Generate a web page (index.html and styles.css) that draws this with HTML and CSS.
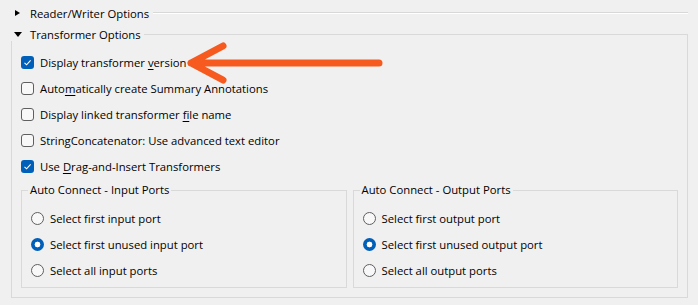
FILE: index.html
```html
<!DOCTYPE html>
<html lang="en">
<head>
    <meta charset="UTF-8">
    <meta name="viewport" content="width=device-width, initial-scale=1.0">
    <title>Transformer Options</title>
    <link rel="stylesheet" href="styles.css">
</head>
<body>
    <div class="section">
        <span class="tri-right"></span>
        <span class="title">Reader/Writer Options</span>
        <span class="etch"></span>
    </div>

    <div class="group">
        <div class="group-head">
            <span class="tri-down"></span>
            <span class="title">Transformer Options</span>
            <span class="head-line"></span>
        </div>
        <div class="group-body">
            <label class="check-row">
                <span class="box checked"><svg viewBox="0 0 13 13" width="13" height="13"><path d="M3.5 6.8 L5.6 8.8 L9.6 4.4" fill="none" stroke="#fff" stroke-width="1.1"/></svg></span>
                <span>Display transformer <u>v</u>ersion</span>
            </label>
            <label class="check-row">
                <span class="box"></span>
                <span>Auto<u>m</u>atically create Summary Annotations</span>
            </label>
            <label class="check-row">
                <span class="box"></span>
                <span>Display linked transformer <u>f</u>ile name</span>
            </label>
            <label class="check-row">
                <span class="box"></span>
                <span>StringConcatenator: Use advanced text editor</span>
            </label>
            <label class="check-row">
                <span class="box checked"><svg viewBox="0 0 13 13" width="13" height="13"><path d="M3.5 6.8 L5.6 8.8 L9.6 4.4" fill="none" stroke="#fff" stroke-width="1.1"/></svg></span>
                <span>Use <u>D</u>rag-and-Insert Transformers</span>
            </label>

            <div class="ports">
                <fieldset class="port-box">
                    <legend>Auto Connect - Input Ports</legend>
                    <label class="radio-row"><span class="dot"></span><span>Select first input port</span></label>
                    <label class="radio-row"><span class="dot on"></span><span>Select first unused input port</span></label>
                    <label class="radio-row"><span class="dot"></span><span>Select all input ports</span></label>
                </fieldset>
                <fieldset class="port-box">
                    <legend>Auto Connect - Output Ports</legend>
                    <label class="radio-row"><span class="dot"></span><span>Select first output port</span></label>
                    <label class="radio-row"><span class="dot on"></span><span>Select first unused output port</span></label>
                    <label class="radio-row"><span class="dot"></span><span>Select all output ports</span></label>
                </fieldset>
            </div>
        </div>
    </div>

    <!-- annotation arrow drawn over the dialog -->
    <svg class="arrow" width="698" height="305" viewBox="0 0 698 305">
        <path d="M379 63 L191 63 M223 46 L191 63 L223 80" fill="none" stroke="#f65a1f" stroke-width="7" stroke-linecap="round" stroke-linejoin="round"/>
    </svg>
</body>
</html>
```

FILE: styles.css
```css
body {
    margin: 0;
    padding: 3px 0 0 0;
    font-family: "Open Sans", "Noto Sans", sans-serif;
    font-size: 11.3px;
    color: #000;
    background-color: #f0f0f0;
    position: relative;
    height: 302px;
    overflow: hidden;
}

u {
    text-decoration-thickness: 1px;
    text-underline-offset: 2px;
}

/* collapsed section header */
.section {
    display: flex;
    align-items: center;
    height: 20px;
    margin: 0 10px 0 15px;
}

.tri-right {
    width: 0;
    height: 0;
    border-top: 3.5px solid transparent;
    border-bottom: 3.5px solid transparent;
    border-left: 5px solid #000;
    margin-right: 10px;
}

.etch {
    flex: 1;
    height: 0;
    margin-left: 4px;
    border-top: 1px solid #d8d8d8;
    border-bottom: 1px solid #fff;
}

/* expanded group */
.group {
    margin: 4px 10px 0 11px;
}

.group-head {
    display: flex;
    align-items: center;
    height: 14px;
    padding-left: 3px;
}

.tri-down {
    width: 0;
    height: 0;
    border-left: 4px solid transparent;
    border-right: 4px solid transparent;
    border-top: 5px solid #000;
    margin-right: 8px;
}

.head-line {
    flex: 1;
    align-self: stretch;
    margin: 7px 0 0 3px;
    border-top: 1px solid #d9d9d9;
    border-right: 1px solid #d9d9d9;
}

.group-body {
    border: 1px solid #d9d9d9;
    border-top: none;
    padding: 8px 9px 9px 9px;
}

.check-row {
    display: flex;
    align-items: center;
    gap: 6px;
    height: 26px;
}

.box {
    width: 11px;
    height: 11px;
    border: 1px solid #5f5f5f;
    border-radius: 3px;
    background-color: #f8f8f8;
    flex-shrink: 0;
}

.box.checked {
    width: 13px;
    height: 13px;
    border: none;
    background-color: #005fb8;
}

.box svg {
    display: block;
}

/* port groups */
.ports {
    display: grid;
    grid-template-columns: 1fr 1fr;
    gap: 6px;
    margin-top: 3px;
}

.port-box {
    margin: 0;
    padding: 7px 0 4px 0;
    border: 1px solid #d9d9d9;
    min-width: 0;
}

.port-box legend {
    margin-left: 6px;
    padding: 0 2px;
    line-height: 16px;
}

.radio-row {
    display: flex;
    align-items: center;
    gap: 6px;
    height: 26px;
    padding-left: 9px;
}

.dot {
    width: 11px;
    height: 11px;
    border: 1px solid #5f5f5f;
    border-radius: 50%;
    background-color: #f8f8f8;
    flex-shrink: 0;
}

.dot.on {
    width: 13px;
    height: 13px;
    border: none;
    background: radial-gradient(circle, #fff 0 2.6px, #005fb8 3.2px);
}

.arrow {
    position: absolute;
    left: 0;
    top: 0;
    pointer-events: none;
}
```
